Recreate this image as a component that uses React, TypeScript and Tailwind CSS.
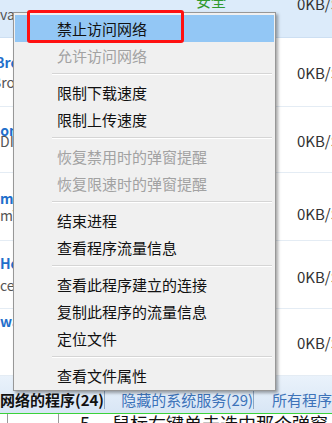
import React from 'react';

type Item = { t: string; hl?: boolean; dis?: boolean } | 'sep';

const items: Item[] = [
  { t: '禁止访问网络', hl: true },
  { t: '允许访问网络', dis: true },
  'sep',
  { t: '限制下载速度' },
  { t: '限制上传速度' },
  'sep',
  { t: '恢复禁用时的弹窗提醒', dis: true },
  { t: '恢复限速时的弹窗提醒', dis: true },
  'sep',
  { t: '结束进程' },
  { t: '查看程序流量信息' },
  'sep',
  { t: '查看此程序建立的连接' },
  { t: '复制此程序的流量信息' },
  { t: '定位文件' },
  'sep',
  { t: '查看文件属性' },
];

const rows = [
  { h: 'h-[69px]', l1: 'Browser', l1c: '-ml-[5px] mt-[17px]', l2: 'Broker.exe', l2c: '-ml-[8px] mt-[6px]', kb: 'mt-[27px]' },
  { h: 'h-[66px]', l1: 'Connection', l1c: '-ml-[9px] mt-[16px]', l2: 'DIAGSVC', l2c: 'ml-0 -mt-[3px]', kb: 'mt-[26px]' },
  { h: 'h-[68px]', l1: 'mVPN Service', l1c: 'ml-0 mt-[18px]', l2: 'mVPN.exe', l2c: 'ml-0 mt-[3px]', kb: 'mt-[33px]' },
  { h: 'h-[68px]', l1: 'HostAgent', l1c: 'ml-0 mt-[15px]', l2: 'ce.exe', l2c: 'ml-0 mt-[8px]', kb: 'mt-[28px]' },
  { h: 'h-[67px]', l1: 'wallpaper', l1c: 'ml-0 mt-[5px]', l2: '', l2c: 'ml-0 mt-0', kb: 'mt-[26px]' },
];

export default function App() {
  return (
    <div className="relative w-[332px] h-[423px] overflow-hidden bg-white font-['Noto_Sans_CJK_SC','Noto_Sans',sans-serif]">
      {/* background list */}
      <div className="flex flex-col">
        <div className="h-[38px] bg-[#dcebfa] border-b border-[#cddff2] grid grid-cols-[196px_101px_1fr] items-start overflow-hidden">
          <div className="text-[14px] leading-[14px] text-[#555] mt-[7px] whitespace-nowrap">vare.exe</div>
          <div className="text-[15px] leading-[15px] text-[#2f9a2f] -mt-[7px] whitespace-nowrap">安全</div>
          <div className="text-[15px] leading-[15px] text-[#333] -mt-[4px] whitespace-nowrap">0KB/S</div>
        </div>
        {rows.map((r, i) => (
          <div key={i} className={`${r.h} border-b border-[#e4ecf4] grid grid-cols-[297px_1fr] items-start overflow-hidden`}>
            <div className="flex flex-col">
              <div className={`text-[14px] leading-[14px] font-bold text-[#1f6fcb] whitespace-nowrap ${r.l1c}`}>{r.l1}</div>
              {r.l2 && (
                <div className={`text-[14px] leading-[14px] text-[#555] whitespace-nowrap ${r.l2c}`}>{r.l2}</div>
              )}
            </div>
            <div className={`text-[15px] leading-[15px] text-[#333] whitespace-nowrap ${r.kb}`}>0KB/S</div>
          </div>
        ))}
      </div>

      {/* status / tab bar */}
      <div className="h-[37px] bg-gradient-to-b from-[#eaf2fb] to-[#d8e6f5] flex items-start pt-[16px] whitespace-nowrap">
        <div className="w-[120px] text-[15px] leading-[15px] font-bold text-[#111]">网络的程序(24)</div>
        <div className="w-px h-[18px] -mt-[1px] bg-[#8ea6c2]" />
        <div className="w-[160px] pl-[16px] text-[15px] leading-[15px] text-[#3d73b9]">隐藏的系统服务(29)</div>
        <div className="w-px h-[18px] -mt-[1px] bg-[#8ea6c2]" />
        <div className="pl-[18px] text-[15px] leading-[15px] text-[#3d73b9]">所有程序</div>
      </div>
      <div className="h-px bg-[#3ad23a]" />
      <div className="h-[9px] flex overflow-hidden">
        <div className="w-[7px]" />
        <div className="w-[51px] border-l border-[#999]" />
        <div className="flex-1 border-l border-[#999] pl-[21px] text-[18px] leading-[18px] text-[#111] whitespace-nowrap">5、 鼠标右键单击选中那个弹窗</div>
      </div>

      {/* context menu */}
      <div className="absolute left-[13px] top-[12px] w-[263px] border border-[#979797] bg-[#f0f0f0] pt-[2px] pb-[1px] px-px shadow-[2px_2px_3px_rgba(0,0,0,0.35)]">
        {items.map((it, i) =>
          it === 'sep' ? (
            <div key={i} className="h-[10px] flex flex-col justify-center pl-[37px] pr-[2px]">
              <div className="h-px bg-[#d5d5d5]" />
              <div className="h-px bg-white" />
            </div>
          ) : (
            <div
              key={i}
              className={`h-[27px] flex items-center pl-[42px] text-[15px] leading-[15px] whitespace-nowrap ${it.hl ? 'bg-[#93c7f5]' : ''} ${it.dis ? 'text-[#a2a2a2]' : 'text-[#111]'}`}
            >
              {it.t}
            </div>
          )
        )}
      </div>

      {/* red highlight box */}
      <div className="absolute left-[27px] top-[10px] w-[157px] h-[33px] border-[3px] border-[#ff1010] rounded-[3px]" />
    </div>
  );
}
